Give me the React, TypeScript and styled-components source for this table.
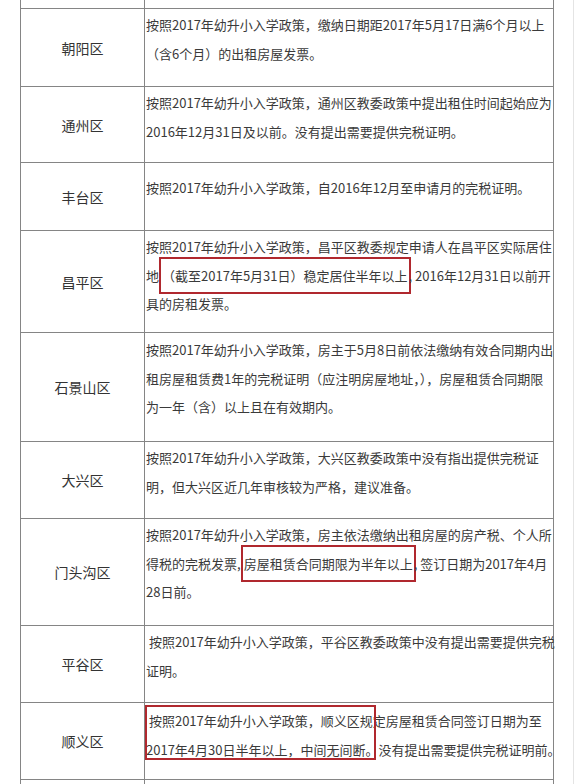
import React from "react";
import styled, { createGlobalStyle } from "styled-components";

const GlobalStyle = createGlobalStyle`
  html, body {
    margin: 0;
    padding: 0;
    background: #fff;
  }
  body {
    font-family: "Noto Sans CJK SC", "Microsoft YaHei", sans-serif;
    color: #3a3a3a;
  }
`;

const Page = styled.div`
  width: 573px;
  height: 784px;
  overflow: hidden;
  border-right: 1px solid #e4e4e4;
`;

const Table = styled.div`
  margin-left: 20px;
  width: 534px;
  box-sizing: border-box;
  border-left: 1px solid #858585;
  border-right: 1px solid #858585;
`;

const Row = styled.div<{ $h: number }>`
  display: flex;
  height: ${(p) => p.$h}px;
  box-sizing: border-box;
  border-bottom: 1px solid #858585;
`;

const OpenRow = styled.div`
  display: flex;
  height: 40px;
`;

const NameCell = styled.div`
  width: 124px;
  flex: none;
  box-sizing: border-box;
  border-right: 1px solid #858585;
  display: flex;
  align-items: center;
  justify-content: center;
  font-size: 14px;
  color: #333;
`;

const TextCell = styled.div<{ $pad: number }>`
  flex: 1;
  padding: ${(p) => p.$pad}px 0 0 1px;
  font-size: 13px;
  line-height: 28.5px;
  color: #3a3a3a;
  white-space: pre;
`;

const Line = styled.div``;

const Marked = styled.span`
  border: 2px solid #b0282e;
  padding: 7px 1px;
  margin: 0 -2px 0 0;
`;

const MarkedBlock = styled.span`
  position: relative;
  &::after {
    content: "";
    position: absolute;
    left: -1px;
    right: 3px;
    top: -35px;
    bottom: -1px;
    border: 2px solid #b0282e;
    pointer-events: none;
  }
`;

type Item = {
  name: string;
  h: number;
  pad?: number;
  lines: React.ReactNode[];
};

const rows: Item[] = [
  {
    name: "朝阳区",
    h: 78,
    lines: [
      "按照2017年幼升小入学政策，缴纳日期距2017年5月17日满6个月以上",
      "（含6个月）的出租房屋发票。",
    ],
  },
  {
    name: "通州区",
    h: 76,
    lines: [
      "按照2017年幼升小入学政策，通州区教委政策中提出租住时间起始应为",
      "2016年12月31日及以前。没有提出需要提供完税证明。",
    ],
  },
  {
    name: "丰台区",
    h: 68,
    pad: 11,
    lines: ["按照2017年幼升小入学政策，自2016年12月至申请月的完税证明。"],
  },
  {
    name: "昌平区",
    h: 102,
    lines: [
      "按照2017年幼升小入学政策，昌平区教委规定申请人在昌平区实际居住",
      <>
        地<Marked>（截至2017年5月31日）稳定居住半年以上</Marked>{", "}2016年12月31日以前开
      </>,
      "具的房租发票。",
    ],
  },
  {
    name: "石景山区",
    h: 109,
    pad: 3,
    lines: [
      "按照2017年幼升小入学政策，房主于5月8日前依法缴纳有效合同期内出",
      "租房屋租赁费1年的完税证明（应注明房屋地址，），房屋租赁合同期限",
      "为一年（含）以上且在有效期内。",
    ],
  },
  {
    name: "大兴区",
    h: 77,
    lines: [
      "按照2017年幼升小入学政策，大兴区教委政策中没有指出提供完税证",
      "明，但大兴区近几年审核较为严格，建议准备。",
    ],
  },
  {
    name: "门头沟区",
    h: 107,
    lines: [
      "按照2017年幼升小入学政策，房主依法缴纳出租房屋的房产税、个人所",
      <>
        得税的完税发票,<Marked>房屋租赁合同期限为半年以上</Marked>{", "}签订日期为2017年4月
      </>,
      "28日前。",
    ],
  },
  {
    name: "平谷区",
    h: 77,
    lines: [
      " 按照2017年幼升小入学政策，平谷区教委政策中没有提出需要提供完税",
      "证明。",
    ],
  },
  {
    name: "顺义区",
    h: 77,
    pad: 4,
    lines: [
      " 按照2017年幼升小入学政策，顺义区规定房屋租赁合同签订日期为至",
      <>
        <MarkedBlock>2017年4月30日半年以上，中间无间断。</MarkedBlock>
        没有提出需要提供完税证明前。
      </>,
    ],
  },
];

export default function App() {
  return (
    <Page>
      <GlobalStyle />
      <Table>
        <Row $h={9}>
          <NameCell />
          <TextCell $pad={0} />
        </Row>
        {rows.map((r) => (
          <Row key={r.name} $h={r.h}>
            <NameCell>{r.name}</NameCell>
            <TextCell $pad={r.pad ?? 2}>
              {r.lines.map((l, i) => (
                <Line key={i}>{l}</Line>
              ))}
            </TextCell>
          </Row>
        ))}
        <OpenRow>
          <NameCell />
          <TextCell $pad={0} />
        </OpenRow>
      </Table>
    </Page>
  );
}
